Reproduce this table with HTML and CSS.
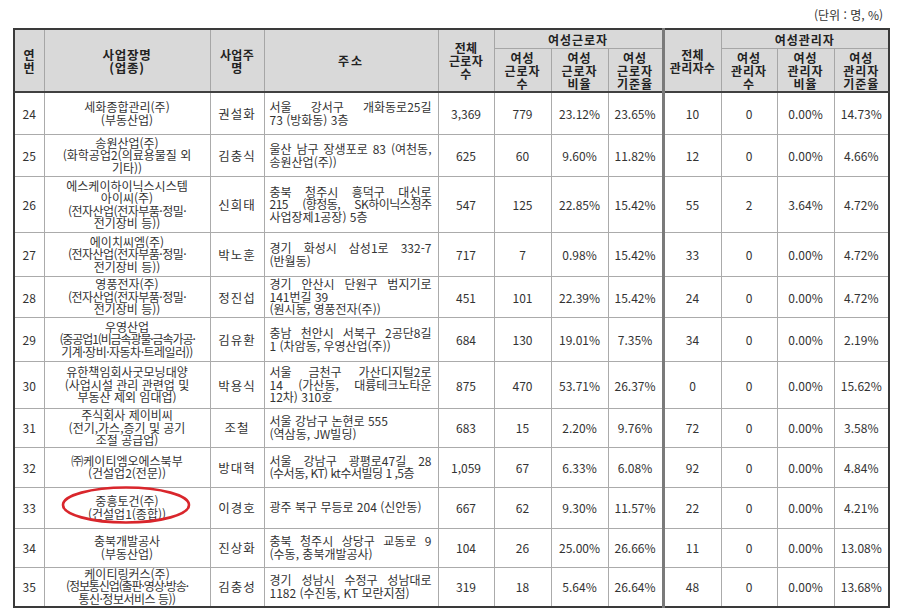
FILE: index.html
```html
<!DOCTYPE html>
<html lang="ko">
<head>
<meta charset="utf-8">
<title>여성근로자 현황</title>
<link rel="stylesheet" href="styles.css">
</head>
<body>
<div class="page">
  <div class="unit">(단위 : 명, %)</div>
  <div class="wrap">
    <table class="grid">
      <colgroup>
        <col class="c-no"><col class="c-name"><col class="c-ceo"><col class="c-addr">
        <col class="c-n1"><col class="c-n2"><col class="c-n3"><col class="c-n4">
        <col class="c-n5"><col class="c-n6"><col class="c-n7"><col class="c-n8">
      </colgroup>
      <thead>
        <tr class="h1">
          <th rowspan="2">연<br>번</th>
          <th rowspan="2" class="wide">사업장명<br>(업종)</th>
          <th rowspan="2">사업주<br>명</th>
          <th rowspan="2" class="wide2">주소</th>
          <th rowspan="2">전체<br>근로자<br>수</th>
          <th colspan="3" class="sp">여성근로자</th>
          <th rowspan="2" class="split">전체<br>관리자수</th>
          <th colspan="3" class="sp">여성관리자</th>
        </tr>
        <tr class="h2">
          <th class="sp">여성<br>근로자<br>수</th>
          <th class="sp">여성<br>근로자<br>비율</th>
          <th class="sp">여성<br>근로자<br>기준율</th>
          <th class="sp">여성<br>관리자<br>수</th>
          <th class="sp">여성<br>관리자<br>비율</th>
          <th class="sp">여성<br>관리자<br>기준율</th>
        </tr>
      </thead>
      <tbody>
        <tr class="r42">
          <td>24</td>
          <td class="nm">세화종합관리(주)<br>(부동산업)</td>
          <td class="ceo">권설화</td>
          <td class="ad"><span class="j">서울 강서구 개화동로25길</span><span>73 (방화동) 3층</span></td>
          <td>3,369</td><td>779</td><td>23.12%</td><td class="split-l">23.65%</td>
          <td>10</td><td>0</td><td>0.00%</td><td>14.73%</td>
        </tr>
        <tr class="r42">
          <td>25</td>
          <td class="nm">송원산업(주)<br>(화학공업2(의료용물질 외<br>기타))</td>
          <td class="ceo">김충식</td>
          <td class="ad"><span class="j">울산 남구 장생포로 83 (여천동,</span><span>송원산업(주))</span></td>
          <td>625</td><td>60</td><td>9.60%</td><td class="split-l">11.82%</td>
          <td>12</td><td>0</td><td>0.00%</td><td>4.66%</td>
        </tr>
        <tr class="r56">
          <td>26</td>
          <td class="nm">에스케이하이닉스시스템<br>아이씨(주)<br><span class="t1">(전자산업(전자부품·정밀·</span><br>전기장비 등))</td>
          <td class="ceo">신희태</td>
          <td class="ad"><span class="j">충북 청주시 흥덕구 대신로</span><span class="j t1">215 (향정동, SK하이닉스청주</span><span>사업장제1공장) 5층</span></td>
          <td>547</td><td>125</td><td>22.85%</td><td class="split-l">15.42%</td>
          <td>55</td><td>2</td><td>3.64%</td><td>4.72%</td>
        </tr>
        <tr class="r44">
          <td>27</td>
          <td class="nm">에이치씨엠(주)<br><span class="t1">(전자산업(전자부품·정밀·</span><br>전기장비 등))</td>
          <td class="ceo">박노훈</td>
          <td class="ad"><span class="j">경기 화성시 삼성1로 332-7</span><span>(반월동)</span></td>
          <td>717</td><td>7</td><td>0.98%</td><td class="split-l">15.42%</td>
          <td>33</td><td>0</td><td>0.00%</td><td>4.72%</td>
        </tr>
        <tr class="r41">
          <td>28</td>
          <td class="nm">영풍전자(주)<br><span class="t1">(전자산업(전자부품·정밀·</span><br>전기장비 등))</td>
          <td class="ceo">정진섭</td>
          <td class="ad"><span class="j">경기 안산시 단원구 범지기로</span><span>141번길 39</span><span>(원시동, 영풍전자(주))</span></td>
          <td>451</td><td>101</td><td>22.39%</td><td class="split-l">15.42%</td>
          <td>24</td><td>0</td><td>0.00%</td><td>4.72%</td>
        </tr>
        <tr class="r44">
          <td>29</td>
          <td class="nm">우영산업<br><span class="t2">(중공업1(비금속광물·금속가공·</span><br><span class="t1">기계·장비·자동차·트레일러))</span></td>
          <td class="ceo">김유환</td>
          <td class="ad"><span class="j">충남 천안시 서북구 2공단8길</span><span>1 (차암동, 우영산업(주))</span></td>
          <td>684</td><td>130</td><td>19.01%</td><td class="split-l">7.35%</td>
          <td>34</td><td>0</td><td>0.00%</td><td>2.19%</td>
        </tr>
        <tr class="r47">
          <td>30</td>
          <td class="nm">유한책임회사굿모닝대양<br>(사업시설 관리 관련업 및<br>부동산 제외 임대업)</td>
          <td class="ceo">박용식</td>
          <td class="ad"><span class="j">서울 금천구 가산디지털2로</span><span class="j">14 (가산동, 대륭테크노타운</span><span>12차) 310호</span></td>
          <td>875</td><td>470</td><td>53.71%</td><td class="split-l">26.37%</td>
          <td>0</td><td>0</td><td>0.00%</td><td>15.62%</td>
        </tr>
        <tr class="r38">
          <td>31</td>
          <td class="nm">주식회사 제이비씨<br>(전기,가스,증기 및 공기<br>조절 공급업)</td>
          <td class="ceo">조철</td>
          <td class="ad"><span>서울 강남구 논현로 555</span><span>(역삼동, JW빌딩)</span></td>
          <td>683</td><td>15</td><td>2.20%</td><td class="split-l">9.76%</td>
          <td>72</td><td>0</td><td>0.00%</td><td>3.58%</td>
        </tr>
        <tr class="r40">
          <td>32</td>
          <td class="nm">㈜케이티엠오에스북부<br>(건설업2(전문))</td>
          <td class="ceo">방대혁</td>
          <td class="ad"><span class="j">서울 강남구 광평로47길 28</span><span class="t1">(수서동, KT) kt수서빌딩 1 ,5층</span></td>
          <td>1,059</td><td>67</td><td>6.33%</td><td class="split-l">6.08%</td>
          <td>92</td><td>0</td><td>0.00%</td><td>4.84%</td>
        </tr>
        <tr class="r41">
          <td>33</td>
          <td class="nm">중흥토건(주)<br>(건설업1(종합))</td>
          <td class="ceo">이경호</td>
          <td class="ad"><span>광주 북구 무등로 204 (신안동)</span></td>
          <td>667</td><td>62</td><td>9.30%</td><td class="split-l">11.57%</td>
          <td>22</td><td>0</td><td>0.00%</td><td>4.21%</td>
        </tr>
        <tr class="r39">
          <td>34</td>
          <td class="nm">충북개발공사<br>(부동산업)</td>
          <td class="ceo">진상화</td>
          <td class="ad"><span class="j">충북 청주시 상당구 교동로 9</span><span>(수동, 충북개발공사)</span></td>
          <td>104</td><td>26</td><td>25.00%</td><td class="split-l">26.66%</td>
          <td>11</td><td>0</td><td>0.00%</td><td>13.08%</td>
        </tr>
        <tr class="r39">
          <td>35</td>
          <td class="nm">케이티링커스(주)<br><span class="t2">(정보통신업(출판·영상·방송·</span><br><span class="t1">통신·정보서비스 등))</span></td>
          <td class="ceo">김충성</td>
          <td class="ad"><span class="j">경기 성남시 수정구 성남대로</span><span>1182 (수진동, KT 모란지점)</span></td>
          <td>319</td><td>18</td><td>5.64%</td><td class="split-l">26.64%</td>
          <td>48</td><td>0</td><td>0.00%</td><td>13.68%</td>
        </tr>
      </tbody>
    </table>
    <svg class="mark" width="140" height="44" viewBox="0 0 140 44">
      <ellipse cx="70" cy="22" rx="63" ry="17.5" fill="none" stroke="#d9262c" stroke-width="2.6"/>
    </svg>
  </div>
</div>
</body>
</html>
```

FILE: styles.css
```css
html, body {
  margin: 0;
  padding: 0;
  background: #ffffff;
}

body {
  font-family: "Noto Sans CJK KR", "Noto Sans", sans-serif;
  color: #333333;
}

.page {
  padding-left: 13px;
  width: 876px;
}

.unit {
  height: 28px;
  box-sizing: border-box;
  padding-top: 7px;
  padding-right: 6px;
  text-align: right;
  font-size: 12px;
  line-height: 15px;
  color: #333;
}

.wrap {
  position: relative;
}

.grid {
  border-collapse: collapse;
  table-layout: fixed;
  width: 876px;
  border: 2px solid #3a3a3a;
  font-size: 12px;
}

.c-no { width: 30px; }
.c-name { width: 166px; }
.c-ceo { width: 54px; }
.c-addr { width: 174px; }
.c-n1 { width: 56px; }
.c-n2 { width: 57px; }
.c-n3 { width: 57px; }
.c-n4 { width: 55px; }
.c-n5 { width: 58px; }
.c-n6 { width: 56px; }
.c-n7 { width: 57px; }
.c-n8 { width: 55px; }

.grid th {
  background: #d9d9d9;
  font-weight: bold;
  font-size: 12px;
  line-height: 13px;
  color: #222;
  border: 1px solid #a6a6a6;
  padding: 0;
  text-align: center;
  vertical-align: middle;
  letter-spacing: 0.3px;
}

.grid th.wide {
  font-size: 12.5px;
  letter-spacing: 0.8px;
}

.grid th.wide2 {
  letter-spacing: 2px;
}

.grid th.sp {
  letter-spacing: 1px;
}

.grid thead tr.h2 th {
  border-bottom: 2px solid #404040;
}

.grid thead tr.h1 th[rowspan] {
  border-bottom: 2px solid #404040;
}

.h1 th { height: 18px; }
.h2 th { height: 42px; }

.grid td {
  border: 1px solid #ababab;
  padding: 0;
  text-align: center;
  vertical-align: middle;
  line-height: 13px;
  white-space: nowrap;
}

.grid th.split,
.grid td.split-l + td {
  border-left: 3px solid #7a7a7a;
}

.grid td.nm {
  line-height: 12.5px;
}

.grid td.ceo {
  font-size: 12.5px;
  letter-spacing: 1px;
}

.grid td.ad {
  text-align: left;
  padding: 0 6px 0 5px;
  line-height: 12.5px;
}

.ad span {
  display: block;
}

.ad span.j {
  text-align: justify;
  text-align-last: justify;
}

.t1 { letter-spacing: -0.5px; }
.t2 { letter-spacing: -1.1px; }

.r38 td { height: 37px; }
.r39 td { height: 38px; }
.r40 td { height: 39px; }
.r41 td { height: 40px; }
.r42 td { height: 41px; }
.r44 td { height: 43px; }
.r47 td { height: 46px; }
.r56 td { height: 55px; }

.mark {
  position: absolute;
  left: 43px;
  top: 455px;
  pointer-events: none;
}
```
